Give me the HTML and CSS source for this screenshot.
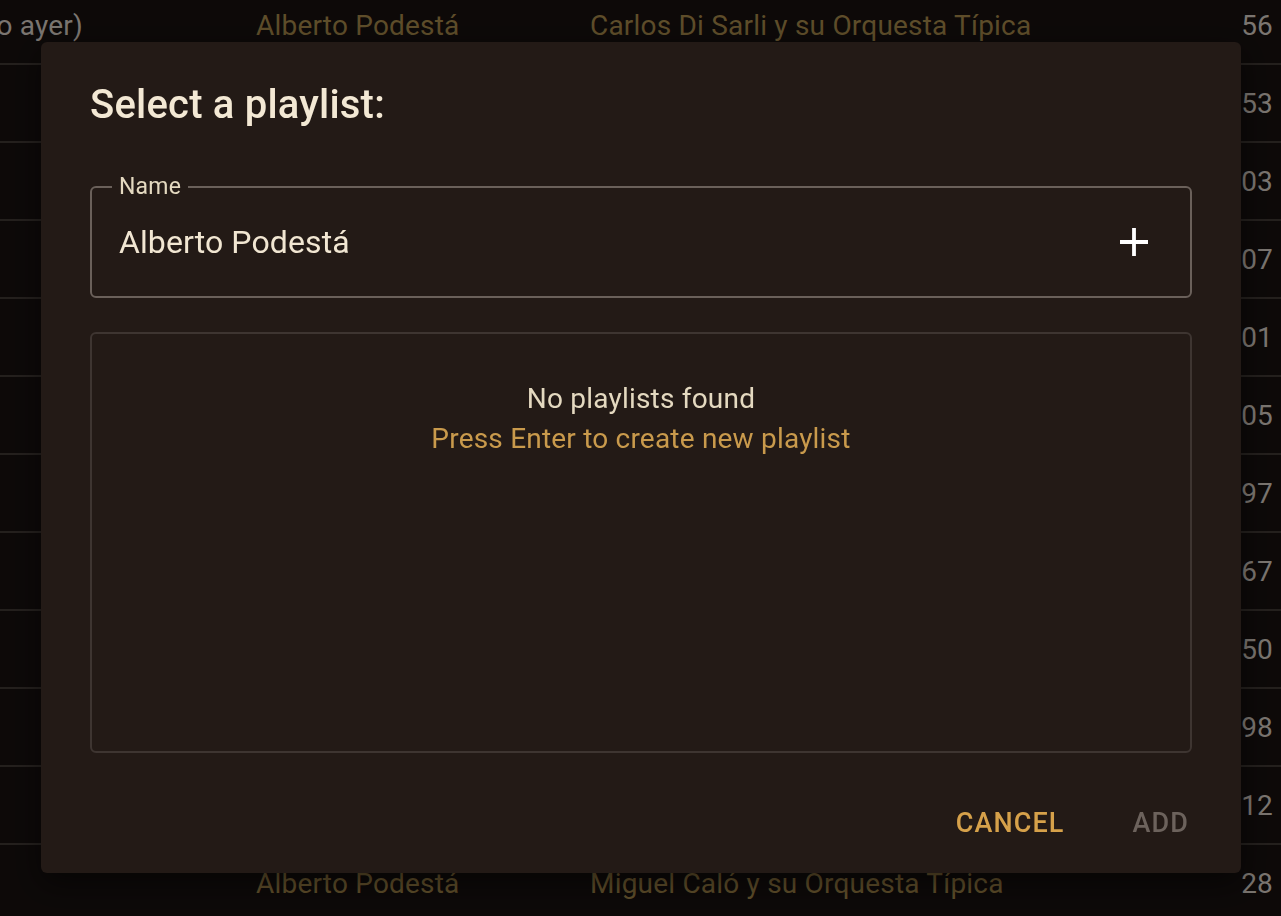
FILE: index.html
```html
<!DOCTYPE html>
<html lang="en">
<head>
  <meta charset="UTF-8">
  <meta name="viewport" content="width=device-width, initial-scale=1.0">
  <title>Playlists</title>
  <link rel="stylesheet" href="styles.css">
</head>
<body>
  <div class="track-list">
    <div class="track-row">
      <div class="cell title"><span>La vi llegar (grabado ayer)</span></div>
      <div class="cell singer">Alberto Podestá</div>
      <div class="cell orchestra">Carlos Di Sarli y su Orquesta Típica</div>
      <div class="cell time">56</div>
    </div>
    <div class="track-row"><div class="cell time">53</div></div>
    <div class="track-row"><div class="cell time">03</div></div>
    <div class="track-row"><div class="cell time">07</div></div>
    <div class="track-row"><div class="cell time">01</div></div>
    <div class="track-row"><div class="cell time">05</div></div>
    <div class="track-row"><div class="cell time">97</div></div>
    <div class="track-row"><div class="cell time">67</div></div>
    <div class="track-row"><div class="cell time">50</div></div>
    <div class="track-row"><div class="cell time">98</div></div>
    <div class="track-row"><div class="cell time">12</div></div>
    <div class="track-row">
      <div class="cell title"><span></span></div>
      <div class="cell singer">Alberto Podestá</div>
      <div class="cell orchestra">Miguel Caló y su Orquesta Típica</div>
      <div class="cell time">28</div>
    </div>
  </div>

  <div class="backdrop">
    <div class="dialog">
      <h2 class="dialogTitle">Select a playlist:</h2>

      <fieldset class="nameField">
        <legend>Name</legend>
        <div class="fieldRow">
          <input type="text" value="Alberto Podestá" class="nameInput">
          <button class="addIcon" aria-label="create">
            <svg width="28" height="28" viewBox="0 0 28 28">
              <path d="M14 0v28M0 14h28" stroke="#ffffff" stroke-width="3.8" fill="none"/>
            </svg>
          </button>
        </div>
      </fieldset>

      <div class="playlistBox">
        <div class="emptyText">No playlists found</div>
        <div class="hintText">Press Enter to create new playlist</div>
      </div>

      <div class="actions">
        <button class="textBtn cancelBtn">Cancel</button>
        <button class="textBtn addBtn" disabled>Add</button>
      </div>
    </div>
  </div>
</body>
</html>
```

FILE: styles.css
```css
body {
  margin: 0;
  background-color: #0f0b0a;
  font-family: Roboto, "Liberation Sans", sans-serif;
  overflow: hidden;
  height: 916px;
}

/* table behind the dialog */
.track-list {
  margin-top: -13px;
}
.track-row {
  height: 78px;
  display: flex;
  align-items: center;
  border-bottom: 2px solid #2a2522;
  box-sizing: border-box;
  font-size: 28px;
  letter-spacing: 0.2px;
}
.cell {
  white-space: nowrap;
}
.title {
  width: 83px;
  overflow: hidden;
  display: flex;
  justify-content: flex-end;
  color: #8c8680;
}
.singer {
  margin-left: 173px;
  width: 334px;
  color: #6b5830;
}
.orchestra {
  width: 620px;
  color: #6b5830;
}
.time {
  margin-left: auto;
  padding-right: 8px;
  color: #8c8680;
}

.backdrop {
  position: fixed;
  inset: 0;
  background: rgba(0, 0, 0, 0.12);
}
.dialog {
  position: absolute;
  left: 41px;
  top: 42px;
  width: 1200px;
  height: 831px;
  box-sizing: border-box;
  padding: 0 49px;
  background-color: #231a16;
  border-radius: 6px;
  box-shadow: 0 10px 30px rgba(0, 0, 0, 0.5);
  display: flex;
  flex-direction: column;
}
.dialogTitle {
  margin: 39px 0 0 0;
  line-height: 48px;
  font-size: 40px;
  font-weight: 500;
  color: #f3e8d4;
  letter-spacing: 0.2px;
}

.nameField {
  margin: 46px 0 0 0;
  padding: 0 42px 11px 27px;
  border: 2px solid #6a605a;
  border-radius: 6px;
}
.nameField legend {
  padding: 0 7px;
  margin-left: -7px;
  line-height: 24px;
  font-size: 23px;
  color: #e4d9c0;
  letter-spacing: 0.2px;
}
.fieldRow {
  height: 86px;
  display: flex;
  align-items: center;
}
.nameInput {
  flex: 1;
  background: none;
  border: none;
  outline: none;
  padding: 0;
  font-family: Roboto, "Liberation Sans", sans-serif;
  font-size: 32px;
  color: #f1e6d2;
  letter-spacing: 0.1px;
}
.addIcon {
  background: none;
  border: none;
  padding: 0;
  width: 28px;
  height: 28px;
  display: flex;
}

.playlistBox {
  margin-top: 34px;
  height: 421px;
  box-sizing: border-box;
  border: 2px solid #3e3531;
  border-radius: 6px;
  display: flex;
  flex-direction: column;
  align-items: center;
  padding-top: 45px;
  font-size: 28px;
  letter-spacing: 0.2px;
}
.emptyText {
  color: #e4d9c0;
  line-height: 40px;
}
.hintText {
  color: #c99a4c;
  line-height: 40px;
}

.actions {
  display: flex;
  justify-content: flex-end;
  margin-top: 54px;
  gap: 68px;
  padding-right: 3px;
}
.textBtn {
  background: none;
  border: none;
  padding: 0;
  line-height: 32px;
  font-family: Roboto, "Liberation Sans", sans-serif;
  font-size: 27px;
  font-weight: 500;
  letter-spacing: 1.1px;
  text-transform: uppercase;
  cursor: pointer;
}
.cancelBtn {
  color: #d6a14a;
}
.addBtn {
  color: #6c625c;
}
```
